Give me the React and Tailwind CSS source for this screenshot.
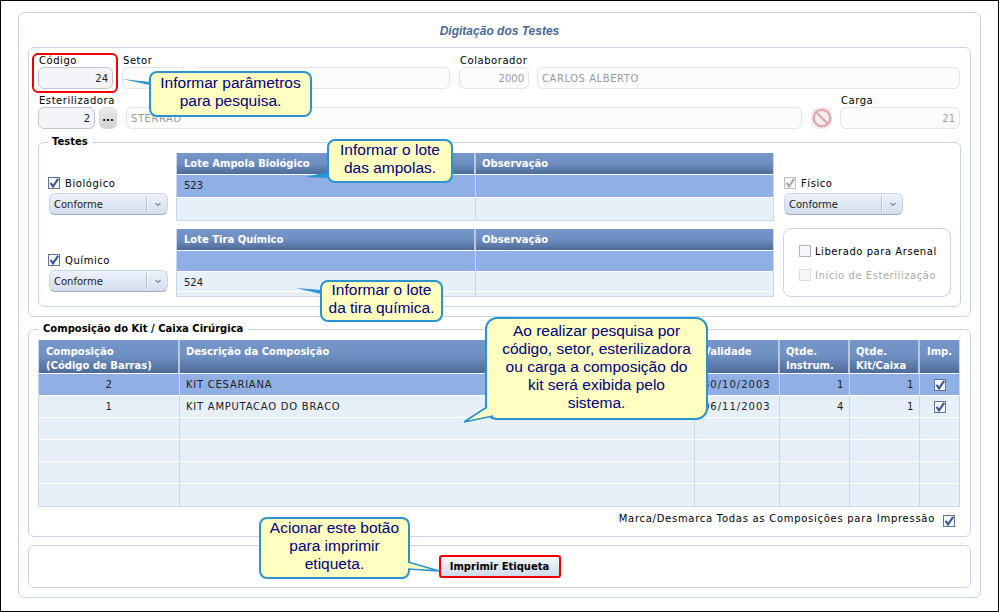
import React from 'react';
import { Ban } from 'lucide-react';

const headerBg = 'bg-gradient-to-b from-[#7596c9] via-[#6f8fc2] to-[#4e6b97] tracking-normal';

function Check({ checked = true, disabled = false, dim = false }) {
  return (
    <svg width="12" height="12" viewBox="0 0 12 12" className="shrink-0">
      <rect
        x="0.5"
        y="0.5"
        width="11"
        height="11"
        fill={disabled ? '#f7f7f7' : '#f4f7fc'}
        stroke={disabled ? (dim ? '#b9c1cf' : '#dcdcdc') : checked ? '#5f7499' : '#a9b4c6'}
      />
      {checked && (
        <path d="M2.6 5.8 L5 9.4 L10.2 1.8" fill="none" strokeWidth="2.1" stroke={disabled ? '#a8a8a8' : '#3c5a92'} />
      )}
    </svg>
  );
}

function Input({ value, width, disabled = true, right = false }) {
  return (
    <div
      className={`${width} h-[22px] rounded-md border flex items-center px-[4px] ${right ? 'justify-end tracking-normal' : ''} ${
        disabled ? 'bg-[#fcfcfc] border-[#e4e4e4] text-[#9a9a9a]' : 'bg-[#f3f5f9] border-[#bcc5d3] text-[#222]'
      }`}
    >
      {value}
    </div>
  );
}

function Field({ label, children, className = '' }) {
  return (
    <div className={className}>
      <div className="h-[12px] leading-[11px] pl-[1px] text-black">{label}</div>
      <div className="flex">{children}</div>
    </div>
  );
}

function Select({ className = '' }) {
  return (
    <div className={`w-[119px] h-[22px] rounded-md border border-[#c9d5e8] border-b-[#a3acbb] bg-gradient-to-b from-[#edf2fb] to-[#d3deee] flex items-center tracking-normal ${className}`}>
      <span className="w-[96px] pl-[4px] text-[#222]">Conforme</span>
      <span className="w-[2px] h-[16px] bg-[#f8f9fc] border-l border-[#b4bfd0]" />
      <svg width="6" height="5" viewBox="0 0 6 5" className="ml-[7px]">
        <path d="M0.5 1 L3 3.5 L5.5 1" fill="none" stroke="#444" strokeWidth="1" />
      </svg>
    </div>
  );
}

function Legend({ children, className }) {
  return <div className={`absolute bg-white font-bold text-black leading-[12px] tracking-normal ${className}`}>{children}</div>;
}

function MiniTable({ title, rows, className = '' }) {
  return (
    <div className={`w-[598px] border border-[#c8d6ea] border-t-0 text-[#222] tracking-normal ${className}`}>
      <div className={`grid grid-cols-[299px_1fr] h-[22px] border-b border-white ${headerBg} text-white font-bold`}>
        <div className="pl-[7px] leading-[21px] border-r-2 border-[#b9c8df]">{title}</div>
        <div className="pl-[6px] leading-[21px]">Observação</div>
      </div>
      {rows.map((row, i) => (
        <div
          key={i}
          className={`grid grid-cols-[299px_1fr] border-b last:border-b-0 border-white ${row.h} ${row.selected ? 'bg-[#90afe4]' : 'bg-[#e7eff8]'}`}
        >
          <div className="pl-[7px] leading-[21px] border-r border-[#c8d6ea]">{row.text}</div>
          <div />
        </div>
      ))}
    </div>
  );
}

const kitCols = 'grid grid-cols-[141px_515px_85px_70px_70px_1fr]';
const kitRows = [
  { comp: '2', desc: 'KIT CESARIANA', date: '30/10/2003', inst: '1', kit: '1', selected: true },
  { comp: '1', desc: 'KIT AMPUTACAO DO BRACO', date: '06/11/2003', inst: '4', kit: '1' },
  {},
  {},
  {},
  {},
];

function KitTable() {
  return (
    <div className="w-[922px] border border-[#c8d6ea] border-t-0 text-[#222]">
      <div className={`${kitCols} h-[34px] border-b border-white ${headerBg} text-white font-bold leading-[14px]`}>
        <div className="pl-[7px] pt-[5px] border-r-2 border-[#b9c8df]">Composição<br />(Código de Barras)</div>
        <div className="pl-[6px] pt-[5px] border-r-2 border-[#b9c8df]">Descrição da Composição</div>
        <div className="pl-[8px] pt-[5px] border-r-2 border-[#b9c8df]">Validade</div>
        <div className="pl-[6px] pt-[5px] border-r-2 border-[#b9c8df]">Qtde.<br />Instrum.</div>
        <div className="pl-[6px] pt-[5px] border-r-2 border-[#b9c8df]">Qtde.<br />Kit/Caixa</div>
        <div className="pt-[5px] text-center">Imp.</div>
      </div>
      {kitRows.map((row, i) => (
        <div
          key={i}
          className={`${kitCols} h-[22px] border-b last:border-b-0 border-white leading-[21px] ${row.selected ? 'bg-[#90afe4]' : 'bg-[#e7eff8]'}`}
        >
          <div className="text-center border-r border-[#c8d6ea]">{row.comp}</div>
          <div className="pl-[6px] border-r border-[#c8d6ea] tracking-[0.75px]">{row.desc}</div>
          <div className="pl-[8px] border-r border-[#c8d6ea] tracking-[1px]">{row.date}</div>
          <div className="pr-[5px] text-right border-r border-[#c8d6ea]">{row.inst}</div>
          <div className="pr-[5px] text-right border-r border-[#c8d6ea]">{row.kit}</div>
          <div className="flex items-center justify-center">{row.desc && <Check />}</div>
        </div>
      ))}
    </div>
  );
}

function Callout({ className, children }) {
  return (
    <div className={`absolute flex items-center justify-center text-center rounded-[8px] border-2 border-[#2b94d0] bg-[#ffffc0] text-[#000080] font-['Liberation_Sans',sans-serif] text-[15.5px] leading-[18px] tracking-normal pb-[4px] ${className}`}>
      <div>{children}</div>
    </div>
  );
}

export default function App() {
  return (
    <div className="relative w-[999px] h-[612px] border border-black bg-white overflow-hidden font-['DejaVu_Sans',sans-serif] text-[10px] tracking-[0.55px]">
      {/* outer panel */}
      <div className="ml-[17px] mt-[11px] w-[963px] h-[586px] border border-[#c6d5ea] rounded-md">
        <div className="h-[34px] pt-[11px] text-center font-['Liberation_Sans',sans-serif] italic font-bold text-[12px] leading-[14px] text-[#4a6a94] tracking-normal">
          Digitação dos Testes
        </div>

        {/* dados da carga + testes */}
        <div className="ml-[9px] w-[943px] h-[270px] border border-[#c6d5ea] rounded-md pt-[7px] pl-[9px]">
          <div className="flex">
            <Field label="Código"><Input value="24" width="w-[75px]" disabled={false} right /></Field>
            <Field label="Setor" className="ml-[9px]">
              <Input value="" width="w-[64px]" />
              <Input value="" width="w-[257px] ml-[7px]" />
            </Field>
            <Field label="Colaborador" className="ml-[9px]"><Input value="2000" width="w-[70px]" right /></Field>
            <Field label="" className="ml-[8px]"><Input value="CARLOS ALBERTO" width="w-[423px]" /></Field>
          </div>
          <div className="flex mt-[6px]">
            <Field label="Esterilizadora">
              <Input value="2" width="w-[57px]" disabled={false} right />
              <div className="ml-[4px] w-[18px] h-[22px] rounded-md bg-gradient-to-b from-[#ececec] to-[#d2d2d2] border border-[#d8d8d8] flex items-center justify-center font-bold text-black leading-[10px] tracking-normal">...</div>
            </Field>
            <Field label="" className="ml-[9px]"><Input value="STERRAD" width="w-[676px]" /></Field>
            <Field label="" className="ml-[9px]">
              <div className="w-[21px] h-[22px] rounded-md bg-[#f1f1f1] flex items-center justify-center">
                <Ban size={20} strokeWidth={3} className="text-[#e6a9ad]" />
              </div>
            </Field>
            <Field label="Carga" className="ml-[8px]"><Input value="21" width="w-[120px]" right /></Field>
          </div>

          <div className="relative mt-[13px] w-[923px] h-[165px] border border-[#c6d5ea] rounded-md flex pt-[10px]">
            <Legend className="-top-[7px] left-[9px] px-[4px]">Testes</Legend>
            <div className="w-[137px] pl-[9px]">
              <div className="h-[75px] pt-[24px]">
                <div className="flex items-center gap-[5px] h-[12px]"><Check /><span>Biológico</span></div>
                <Select className="mt-[4px] ml-[1px]" />
              </div>
              <div className="pt-[26px]">
                <div className="flex items-center gap-[5px] h-[12px]"><Check /><span>Químico</span></div>
                <Select className="mt-[4px] ml-[1px]" />
              </div>
            </div>
            <div className="w-[608px]">
              <MiniTable title="Lote Ampola Biológico" rows={[{ text: '523', selected: true, h: 'h-[23px]' }, { text: '', h: 'h-[22px]' }]} />
              <MiniTable
                className="mt-[8px]"
                title="Lote Tira Químico"
                rows={[{ text: '', selected: true, h: 'h-[21px]' }, { text: '524', h: 'h-[20px]' }, { text: '', h: 'h-[4px]' }]}
              />
            </div>
            <div className="w-[168px]">
              <div className="h-[75px] pt-[24px]">
                <div className="flex items-center gap-[5px] h-[12px]"><Check disabled dim /><span>Físico</span></div>
                <Select className="mt-[4px]" />
              </div>
              <div className="w-[168px] h-[69px] -ml-[1px] border border-[#c6d5ea] rounded-lg pl-[15px] pt-[16px]">
                <div className="flex items-center gap-[4px] h-[12px]"><Check checked={false} /><span>Liberado para Arsenal</span></div>
                <div className="flex items-center gap-[4px] h-[12px] mt-[12px] text-[#aaa]"><Check checked={false} disabled /><span>Início de Esterilização</span></div>
              </div>
            </div>
          </div>
        </div>

        {/* composicao do kit */}
        <div className="relative mt-[12px] ml-[9px] w-[943px] h-[208px] border border-[#c6d5ea] rounded-md pt-[10px] pl-[9px]">
          <Legend className="-top-[7px] left-[9px] px-[5px]">Composição do Kit / Caixa Cirúrgica</Legend>
          <KitTable />
          <div className="flex items-start justify-end w-[917px] mt-[8px] gap-[8px]">
            <span className="leading-[10px] mt-[-1px] tracking-[0.72px]">Marca/Desmarca Todas as Composições para Impressão</span>
            <Check />
          </div>
        </div>

        {/* rodape */}
        <div className="mt-[8px] ml-[9px] w-[943px] h-[43px] border border-[#c6d5ea] rounded-md flex items-center justify-center">
          <div className="w-[122px] h-[23px] rounded-[3px] border-2 border-[#ee0000] bg-gradient-to-b from-[#f4f6fb] to-[#cfdaea] flex items-center justify-center font-bold text-black tracking-normal">
            Imprimir Etiqueta
          </div>
        </div>
      </div>

      {/* destaque do campo codigo */}
      <div className="absolute left-[31px] top-[52px] w-[86px] h-[40px] rounded-md border-2 border-[#ee0000]" />

      <Callout className="left-[148px] top-[70px] w-[163px] h-[46px]">Informar parâmetros<br />para pesquisa.</Callout>
      <Callout className="left-[326px] top-[138px] w-[126px] h-[44px]">Informar o lote<br />das ampolas.</Callout>
      <Callout className="left-[319px] top-[279px] w-[123px] h-[42px]">Informar o lote<br />da tira química.</Callout>
      <Callout className="left-[484px] top-[316px] w-[223px] h-[103px] rounded-[12px]">
        Ao realizar pesquisa por<br />código, setor, esterilizadora<br />ou carga a composição do<br />kit será exibida pelo<br />sistema.
      </Callout>
      <Callout className="left-[258px] top-[516px] w-[151px] h-[62px]">Acionar este botão<br />para imprimir<br />etiqueta.</Callout>

      {/* pontas dos baloes */}
      <svg width="999" height="612" className="absolute -left-[1px] -top-[1px] pointer-events-none">
        <polygon points="122,79 150,82 150,85" fill="#2b94d0" />
        <polygon points="305,177 327,172 327,178" fill="#2b94d0" />
        <polygon points="296,288 321,290 321,294" fill="#2b94d0" />
        <polygon points="487,408 464,422 493,416" fill="#ffffc0" />
        <polyline points="487,407 464,422 493,416" fill="none" stroke="#2b94d0" strokeWidth="1.6" />
        <polygon points="408,562 438,571 408,569" fill="#ffffc0" />
        <polyline points="408,562 439,571 408,569" fill="none" stroke="#2b94d0" strokeWidth="1.6" />
      </svg>
    </div>
  );
}
